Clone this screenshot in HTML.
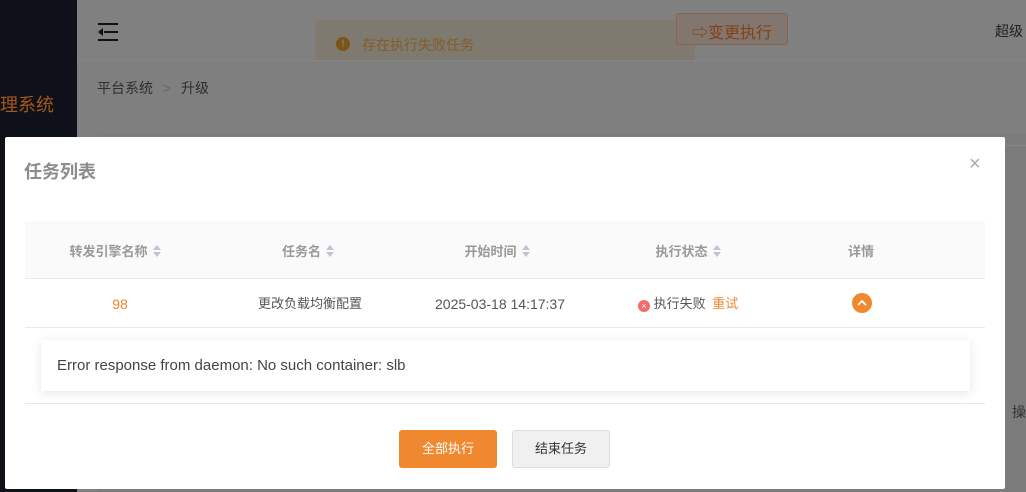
<!DOCTYPE html>
<html><head><meta charset="utf-8"><style>
*{margin:0;padding:0;box-sizing:border-box}
body{width:1026px;height:492px;overflow:hidden;position:relative;background:#7f7f7f;font-family:"Liberation Sans","Noto Sans CJK SC",sans-serif;font-size:14px}
.abs{position:absolute}
.side{left:0;top:0;width:77px;height:492px;background:#0e1119}
.hdr{left:77px;top:0;width:949px;height:60px;background:#808080}
.crumb{left:77px;top:60px;width:949px;height:54px;background:#7f7f7f;border-top:1px solid #858585}
.modal{left:5px;top:137px;width:1000px;height:352px;background:#fff;border-radius:2px}
.th{color:#999;font-weight:bold;font-size:13px;text-align:center;position:absolute;top:241px}
.sort{display:inline-block;width:8px;height:12px;vertical-align:-1px;margin-left:5px}
.td{position:absolute;top:295px;text-align:center;font-size:14px;color:#555;line-height:18px}
</style></head><body>
<div class="abs side"></div>
<div class="abs" style="left:0;top:91px;color:#a6561a;font-size:18px">理系统</div>
<div class="abs hdr"></div>
<svg class="abs" style="left:98px;top:23px" width="22" height="18"><rect x="0" y="0" width="20" height="2" fill="#111"/><rect x="6" y="8" width="14" height="2" fill="#111"/><rect x="0" y="16" width="20" height="2" fill="#111"/><path d="M0 9 L5 5 L5 13Z" fill="#111"/></svg>
<div class="abs" style="left:315px;top:20px;width:380px;height:47px;background:#7f7a70;border:1px solid #86796a;border-radius:4px"></div>
<div class="abs" style="left:336px;top:37px;width:14px;height:14px;border-radius:50%;background:#7d5415;color:#7f7a70;font-size:11px;font-weight:bold;text-align:center;line-height:14px">!</div>
<div class="abs" style="left:362px;top:35px;color:#835c27;font-size:14px">存在执行失败任务</div>
<div class="abs" style="left:676px;top:13px;width:112px;height:32px;border:1px solid #8a6448;border-radius:3px;background:#827770"></div>
<div class="abs" style="left:692px;top:19px;color:#844114;font-size:16px">⇨变更执行</div>
<div class="abs" style="left:995px;top:21px;color:#222;font-size:14px">超级</div>
<div class="abs crumb"></div>
<div class="abs" style="left:97px;top:78px;color:#2e2e2e;font-size:14px">平台系统 <span style="color:#666;margin:0 6px">&gt;</span> 升级</div>
<div class="abs" style="left:97px;top:134px;width:929px;height:358px;background:#7c7c7c"></div>
<div class="abs" style="left:1005px;top:145px;width:21px;height:347px;background:#7b7b7b;border-top:1px solid #888"></div>
<div class="abs" style="left:1012px;top:402px;color:#333;font-size:14px">操</div>
<div class="abs modal"></div>
<div class="abs" style="left:24px;top:158px;color:#8c8c8c;font-size:18px;font-weight:bold">任务列表</div>
<div class="abs" style="left:969px;top:153px;color:#aaa;font-size:20px">×</div>
<div class="abs" style="left:25px;top:221px;width:960px;height:58px;background:#fafafa;border-bottom:1px solid #e8e8ee"></div>
<div class="th" style="left:20px;width:190px">转发引擎名称<svg class="sort" viewBox="0 0 8 12"><path d="M4 0L8 5H0Z M4 12L8 7H0Z" fill="#c0c4cc"/></svg></div>
<div class="th" style="left:213px;width:190px">任务名<svg class="sort" viewBox="0 0 8 12"><path d="M4 0L8 5H0Z M4 12L8 7H0Z" fill="#c0c4cc"/></svg></div>
<div class="th" style="left:402px;width:190px">开始时间<svg class="sort" viewBox="0 0 8 12"><path d="M4 0L8 5H0Z M4 12L8 7H0Z" fill="#c0c4cc"/></svg></div>
<div class="th" style="left:593px;width:190px">执行状态<svg class="sort" viewBox="0 0 8 12"><path d="M4 0L8 5H0Z M4 12L8 7H0Z" fill="#c0c4cc"/></svg></div>
<div class="th" style="left:766px;width:190px">详情</div>
<div class="td" style="left:25px;width:190px;color:#f0832f">98</div>
<div class="td" style="left:215px;width:190px;font-size:13px">更改负载均衡配置</div>
<div class="td" style="left:405px;width:190px">2025-03-18 14:17:37</div>
<div class="td" style="left:638px;text-align:left;font-size:13px"><span style="display:inline-block;width:12px;height:12px;border-radius:50%;background:#f56c6c;color:#fff;font-size:9px;line-height:12px;text-align:center;vertical-align:-1px">×</span> 执行失败 <span style="color:#f0832f;margin-left:3px">重试</span></div>
<div class="abs" style="left:852px;top:293px;width:20px;height:20px;border-radius:50%;background:#f0882f"><svg width="20" height="20"><path d="M6 12L10 8L14 12" stroke="#fff" stroke-width="1.8" fill="none"/></svg></div>
<div class="abs" style="left:25px;top:327px;width:960px;height:1px;background:#e8e8ee"></div>
<div class="abs" style="left:41px;top:340px;width:929px;height:51px;background:#fff;box-shadow:0 2px 10px rgba(0,0,0,.1)"></div>
<div class="abs" style="left:57px;top:357px;color:#444;font-size:15px">Error response from daemon: No such container: slb</div>
<div class="abs" style="left:25px;top:403px;width:960px;height:1px;background:#e8e8ee"></div>
<div class="abs" style="left:399px;top:430px;width:98px;height:38px;background:#f0882f;border-radius:3px;color:#fff;font-size:13px;text-align:center;line-height:38px">全部执行</div>
<div class="abs" style="left:512px;top:430px;width:98px;height:38px;background:#f0f0f0;border:1px solid #ddd;border-radius:3px;color:#333;font-size:13px;text-align:center;line-height:36px">结束任务</div>
</body></html>
